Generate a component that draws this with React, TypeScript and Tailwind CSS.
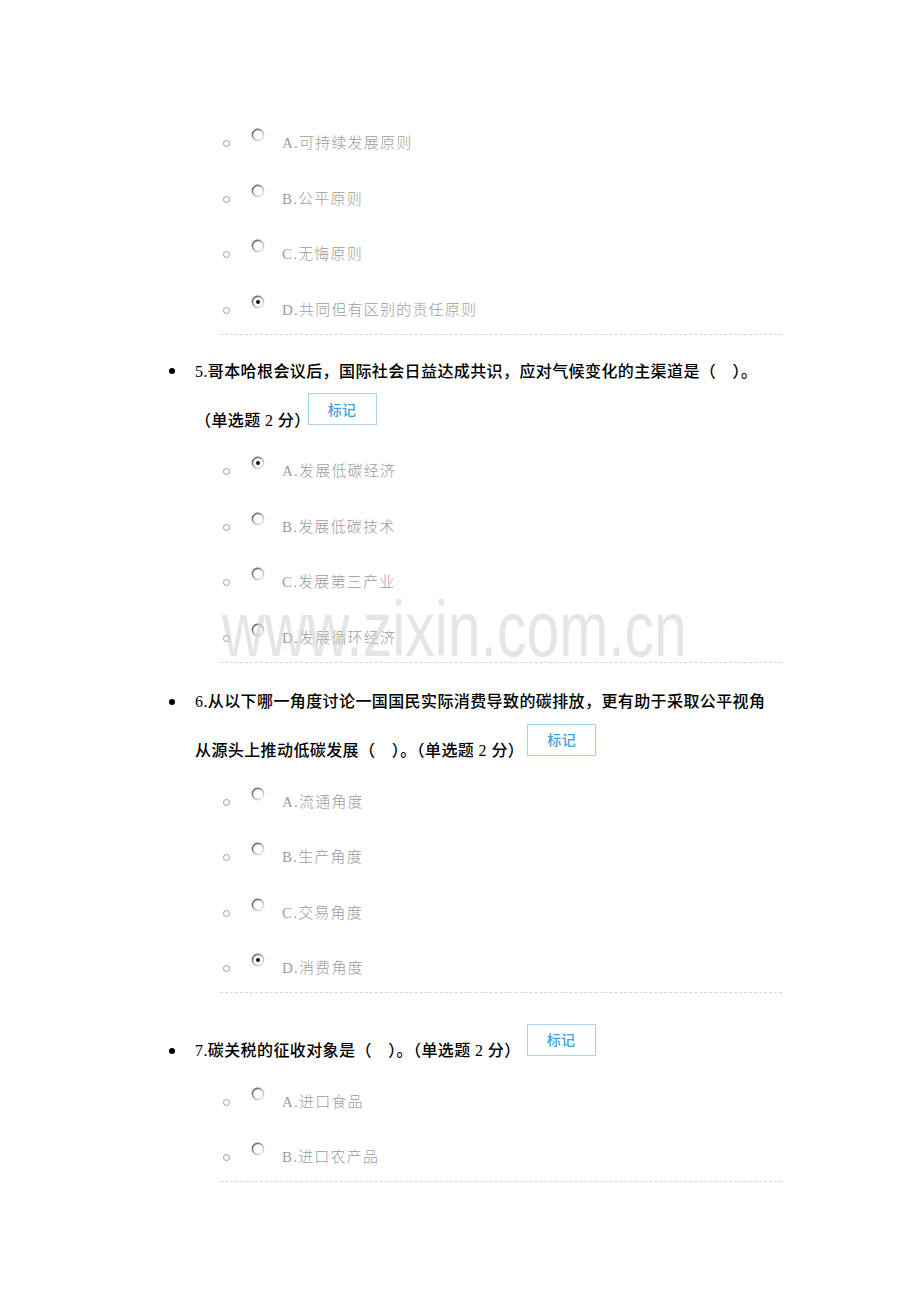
const qFont = { fontFamily: '"Liberation Serif", "Noto Sans CJK SC", serif' };

interface Option {
  label: string;
  checked?: boolean;
}

interface Question {
  lines: string[];
  options: Option[];
  topGap: string;
  btnGap: string;
}

// Classic gradient-ringed radio, as in the screenshot
function Radio({ checked }: { checked?: boolean }) {
  return (
    <svg width="14" height="14" viewBox="0 0 14 14" className="shrink-0">
      <defs>
        <linearGradient id="ring" x1="0" y1="0" x2="1" y2="1">
          <stop offset="0" stopColor="#4a4a4a" />
          <stop offset="0.55" stopColor="#b5b5b5" />
          <stop offset="1" stopColor="#f2f2f2" />
        </linearGradient>
      </defs>
      <circle cx="7" cy="7" r="5.6" fill="#fff" stroke="url(#ring)" strokeWidth="1.6" />
      {checked && <circle cx="7" cy="7" r="2" fill="#111" />}
    </svg>
  );
}

function OptionList({ options }: { options: Option[] }) {
  return (
    <div className="ml-[220px] w-[562px] flex flex-col gap-[7.6px] border-b border-dashed border-[#d6d6d6]">
      {options.map((o) => (
        <div key={o.label} className="flex items-start h-12">
          <span className="ml-[3px] mt-[21px] w-[7px] h-[7px] rounded-full border border-[#9a9a9a] shrink-0" />
          <span className="ml-[21px] mt-[9px]">
            <Radio checked={o.checked} />
          </span>
          <span
            className="ml-[17px] leading-[48px] text-[15px] tracking-[1.2px] text-[#9c9c9c] font-light"
            style={qFont}
          >
            {o.label}
          </span>
        </div>
      ))}
    </div>
  );
}

function MarkButton({ gap }: { gap: string }) {
  return (
    <span
      className={`${gap} mt-[-2.5px] w-[69px] h-[32px] flex items-center justify-center border border-[#a6d3ee] bg-white text-[14px] text-[#3f9fdf] shrink-0`}
      style={{ fontFamily: '"Noto Sans CJK SC", sans-serif' }}
    >
      标记
    </span>
  );
}

function QuestionBlock({ q }: { q: Question }) {
  return (
    <div className={q.topGap}>
      <div className="ml-[169px] flex flex-col text-[16px] tracking-[0.4px] text-black font-medium" style={qFont}>
        {q.lines.map((line, i) => (
          <div key={i} className="flex items-start">
            <span className="w-[26px] shrink-0 flex items-center h-[49px]">
              {i === 0 && <span className="w-[6px] h-[6px] rounded-full bg-black" />}
            </span>
            <span className="leading-[49px] whitespace-pre">{line}</span>
            {i === q.lines.length - 1 && <MarkButton gap={q.btnGap} />}
          </div>
        ))}
      </div>
      <div className="mt-[2.5px]">
        <OptionList options={q.options} />
      </div>
    </div>
  );
}

const questions: Question[] = [
  {
    lines: ['5.哥本哈根会议后，国际社会日益达成共识，应对气候变化的主渠道是（　）。', '（单选题 2 分）'],
    topGap: 'mt-[12px]',
    btnGap: 'ml-[-3px]',
    options: [
      { label: 'A.发展低碳经济', checked: true },
      { label: 'B.发展低碳技术' },
      { label: 'C.发展第三产业' },
      { label: 'D.发展循环经济' },
    ],
  },
  {
    lines: ['6.从以下哪一角度讨论一国国民实际消费导致的碳排放，更有助于采取公平视角', '从源头上推动低碳发展（　）。（单选题 2 分）'],
    topGap: 'mt-[14px]',
    btnGap: 'ml-[3px]',
    options: [
      { label: 'A.流通角度' },
      { label: 'B.生产角度' },
      { label: 'C.交易角度' },
      { label: 'D.消费角度', checked: true },
    ],
  },
  {
    lines: ['7.碳关税的征收对象是（　）。（单选题 2 分）'],
    topGap: 'mt-[33px]',
    btnGap: 'ml-[6px]',
    options: [{ label: 'A.进口食品' }, { label: 'B.进口农产品' }],
  },
];

export default function App() {
  return (
    <div className="relative w-[920px] h-[1302px] bg-white overflow-hidden pt-[119px]">
      <OptionList
        options={[
          { label: 'A.可持续发展原则' },
          { label: 'B.公平原则' },
          { label: 'C.无悔原则' },
          { label: 'D.共同但有区别的责任原则', checked: true },
        ]}
      />
      {questions.map((q) => (
        <QuestionBlock key={q.lines[0]} q={q} />
      ))}

      {/* watermark over the page */}
      <div
        className="absolute left-[222px] top-[591px] text-[77px] leading-[77px] font-light text-[#d4d4d4] opacity-60 origin-left scale-x-[0.765] pointer-events-none whitespace-nowrap"
        style={{ fontFamily: '"Liberation Sans", sans-serif' }}
      >
        www.zixin.com.cn
      </div>
    </div>
  );
}
